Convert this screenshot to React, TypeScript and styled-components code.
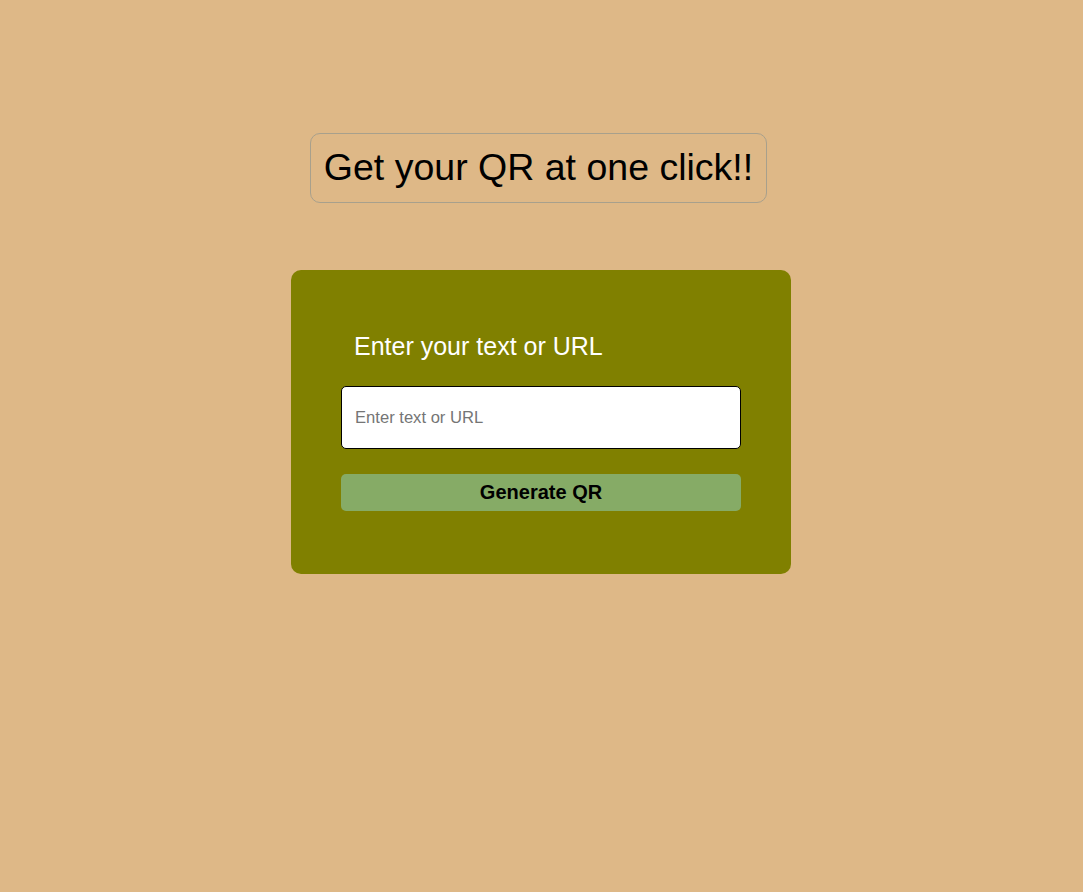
import React, { useState } from "react";
import styled, { createGlobalStyle } from "styled-components";

const GlobalStyle = createGlobalStyle`
  html, body {
    margin: 0;
    padding: 0;
    background-color: #deb887;
    font-family: "Liberation Sans", Arial, sans-serif;
  }
`;

const App = () => {
  const [text, setText] = useState("");

  return (
    <>
      <GlobalStyle />
      <Page>
        <Title>Get your QR at one click!!</Title>
        <Card>
          <Label htmlFor="qr-input">Enter your text or URL</Label>
          <Input
            id="qr-input"
            type="text"
            placeholder="Enter text or URL"
            value={text}
            onChange={(e) => setText(e.target.value)}
            autoFocus
          />
          <GenerateButton type="button">Generate QR</GenerateButton>
        </Card>
      </Page>
    </>
  );
};

export default App;

const Page = styled.div`
  min-height: 892px;
  display: flex;
  flex-direction: column;
  align-items: center;
  padding-top: 133px;
  box-sizing: border-box;
`;

const Title = styled.h1`
  margin: 0 6px 67px 0;
  height: 70px;
  box-sizing: border-box;
  padding: 0 13px 2px;
  display: flex;
  align-items: center;
  border: 1px solid #a8a08c;
  border-radius: 10px;
  font-size: 37.5px;
  font-weight: normal;
  color: #000;
`;

const Card = styled.div`
  width: 500px;
  height: 304px;
  box-sizing: border-box;
  margin-right: 1px;
  padding: 62px 50px 0;
  background-color: #808000;
  border-radius: 10px;
  display: flex;
  flex-direction: column;
`;

const Label = styled.label`
  color: #fff;
  font-size: 25px;
  line-height: 28px;
  padding-left: 13px;
  margin-bottom: 26px;
`;

const Input = styled.input`
  width: 400px;
  height: 63px;
  box-sizing: border-box;
  padding: 0 13px;
  border: 1px solid #000;
  border-radius: 5px;
  background: #fff;
  font-family: "Liberation Sans", Arial, sans-serif;
  font-size: 16.6px;
  color: #000;
  outline: none;
  margin-bottom: 25px;

  &::placeholder {
    color: #757575;
  }
`;

const GenerateButton = styled.button`
  width: 400px;
  height: 37px;
  border: none;
  border-radius: 5px;
  background-color: #86ab66;
  color: #000;
  font-family: "Liberation Sans", Arial, sans-serif;
  font-size: 20px;
  font-weight: bold;
  cursor: pointer;
`;
